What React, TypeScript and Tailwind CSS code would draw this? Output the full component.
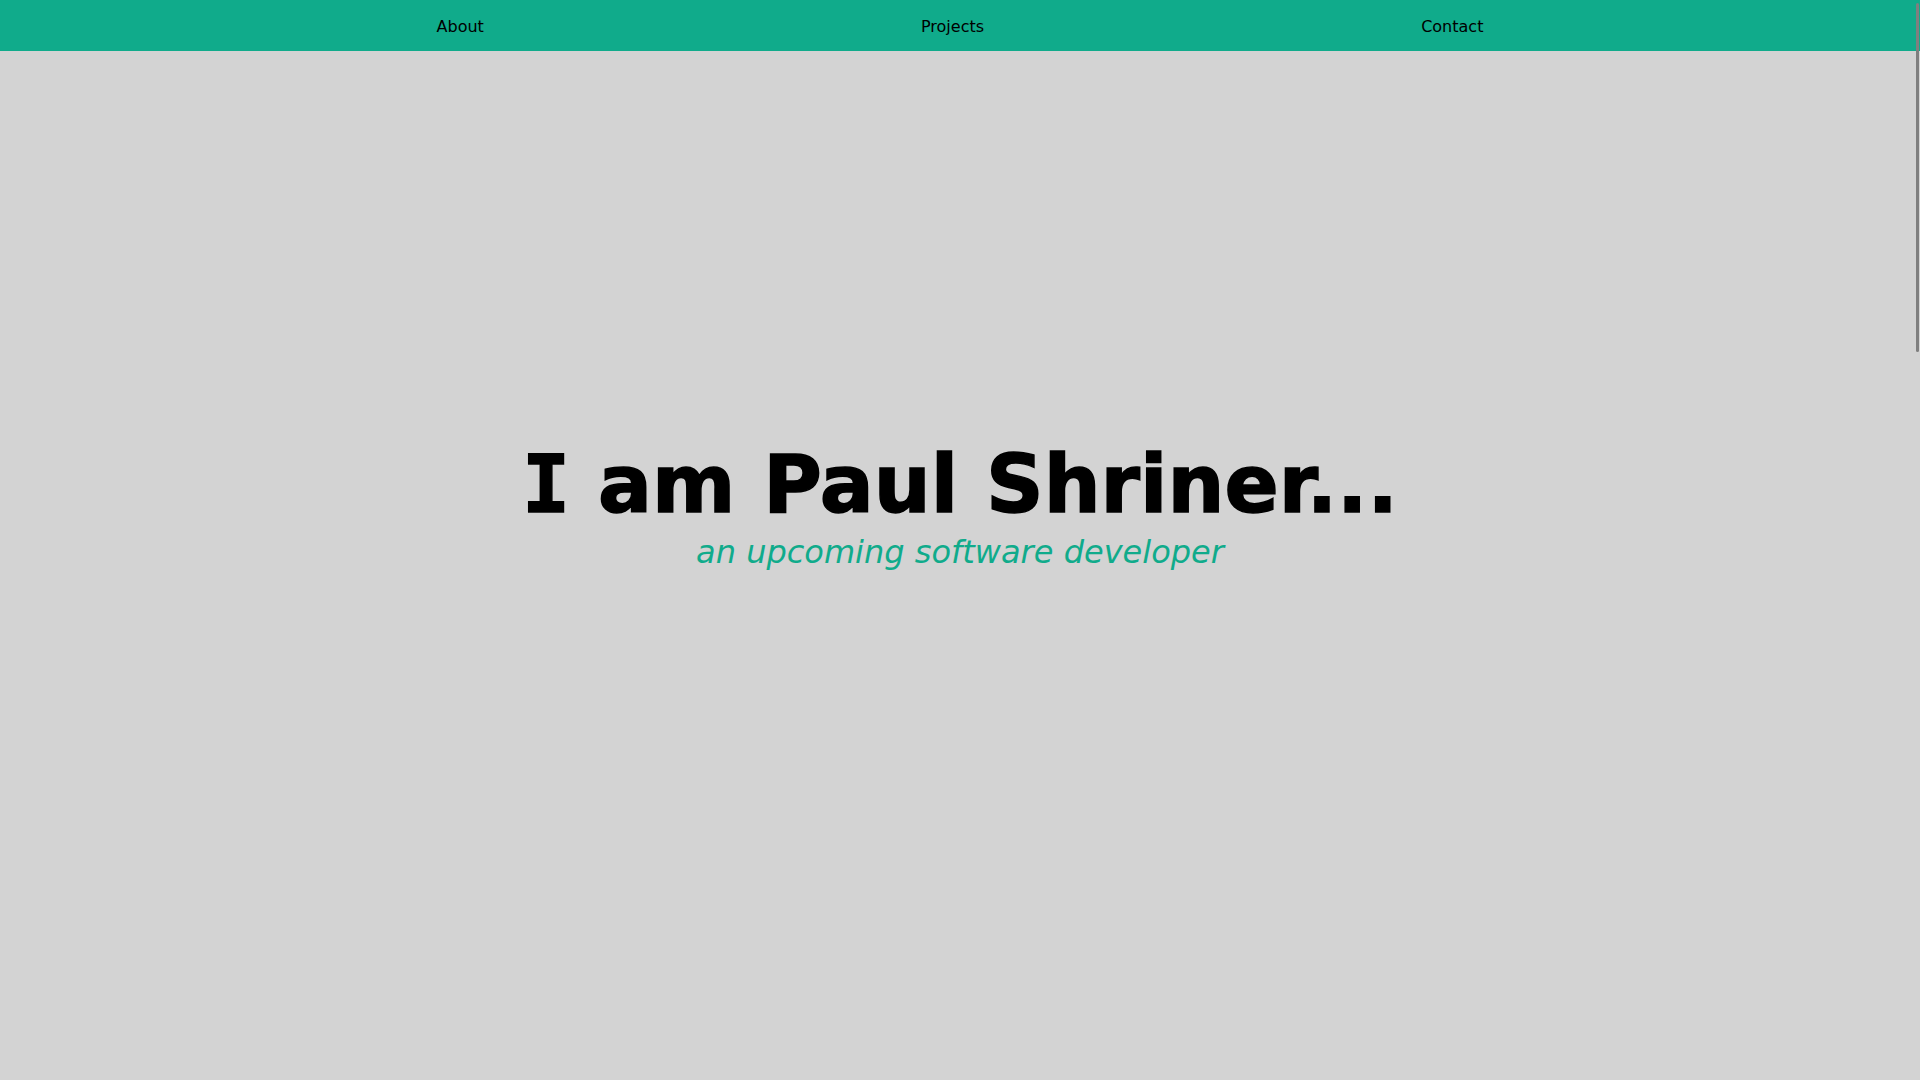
import React from "react";

export default function App() {
  return (
    <div className="relative min-h-[3300px] bg-[#d3d3d3] font-['DejaVu_Sans',sans-serif] text-black">
      <nav className="h-[51px] w-full bg-[#10ab8b]">
        <ul className="mx-auto flex h-full w-[1484px] items-center justify-around text-[16px] leading-[19px]">
          <li className="pt-[1px]">About</li>
          <li className="pt-[1px]">Projects</li>
          <li className="pt-[1px]">Contact</li>
        </ul>
      </nav>
      <section className="flex flex-col items-center pt-[387px]">
        <h1 className="text-[80px] font-bold leading-[93px] [-webkit-text-stroke:1.5px_black]">
          <span className="font-['DejaVu_Sans_Mono',monospace]">I</span> am Paul Shriner...
        </h1>
        <p className="mt-[3px] text-[32px] italic leading-[37px] text-[#10ab8b]">an upcoming software developer</p>
      </section>
      <div className="fixed right-[1px] top-[3px] h-[349px] w-[3px] rounded-full bg-[#7f7f7f]" />
    </div>
  );
}
